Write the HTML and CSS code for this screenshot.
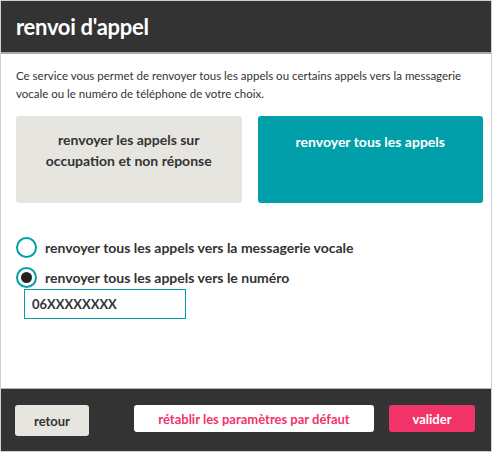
FILE: index.html
```html
<!DOCTYPE html>
<html lang="fr">
<head>
    <meta charset="UTF-8">
    <meta name="viewport" content="width=device-width, initial-scale=1.0">
    <title>renvoi d'appel</title>
    <link rel="stylesheet" href="styles.css">
</head>
<body>
    <div class="dialog">
        <header class="dialog-header">
            <h1>renvoi d'appel</h1>
        </header>

        <div class="dialog-body">
            <p class="intro">Ce service vous permet de renvoyer tous les appels ou certains appels vers la messagerie vocale ou le numéro de téléphone de votre choix.</p>

            <div class="modes">
                <button class="mode">renvoyer les appels sur occupation et non réponse</button>
                <button class="mode active">renvoyer tous les appels</button>
            </div>

            <div class="options">
                <label class="option">
                    <input type="radio" name="target">
                    <span class="radio"></span>
                    renvoyer tous les appels vers la messagerie vocale
                </label>
                <label class="option">
                    <input type="radio" name="target" checked>
                    <span class="radio"></span>
                    renvoyer tous les appels vers le numéro
                </label>
                <input class="number" type="text" value="06XXXXXXXX">
            </div>
        </div>

        <footer class="dialog-footer">
            <button class="btn btn-back">retour</button>
            <button class="btn btn-reset">rétablir les paramètres par défaut</button>
            <button class="btn btn-ok">valider</button>
        </footer>
    </div>
</body>
</html>
```

FILE: styles.css
```css
body {
    margin: 0;
    padding: 0;
    font-family: 'Lato', 'Open Sans', sans-serif;
    color: #333;
    background-color: #fff;
}
.dialog {
    width: 490px;
    height: 450px;
    border: 1px solid #d0d0d0;
    border-right-width: 2px;
    display: flex;
    flex-direction: column;
}
.dialog-header {
    background-color: #333;
    height: 51px;
    border-bottom: 2px solid #a9a9a9;
    display: flex;
    align-items: center;
    padding: 0 15px;
}
.dialog-header h1 {
    margin: 0;
    color: #fff;
    font-size: 22px;
    font-weight: bold;
    letter-spacing: -0.3px;
}
.dialog-body {
    flex: 1;
    padding: 13px 8px 0 15px;
}
.intro {
    margin: 0;
    font-size: 11.5px;
    line-height: 18px;
}
.modes {
    display: flex;
    gap: 16px;
    margin-top: 13px;
}
.mode {
    flex: 1;
    height: 87px;
    border: none;
    border-radius: 3px;
    background-color: #e6e5df;
    color: #333;
    font-family: inherit;
    font-size: 14px;
    font-weight: bold;
    line-height: 21px;
    padding: 13px 16px 0;
    align-self: flex-start;
    display: flex;
    justify-content: center;
    text-align: center;
}
.mode.active {
    background-color: #009faa;
    color: #fff;
    padding-top: 15px;
}
.options {
    margin-top: 29px;
    display: flex;
    flex-direction: column;
}
.option {
    display: flex;
    align-items: center;
    gap: 8px;
    height: 30px;
    font-size: 14px;
    font-weight: bold;
    cursor: pointer;
}
.option input {
    display: none;
}
.radio {
    width: 17px;
    height: 17px;
    border: 2px solid #009faa;
    border-radius: 50%;
    background-color: #fff;
    position: relative;
}
.option input:checked + .radio::after {
    content: "";
    position: absolute;
    top: 3px;
    left: 3px;
    width: 11px;
    height: 11px;
    border-radius: 50%;
    background-color: #222;
}
.number {
    margin: -3px 0 0 8px;
    width: 162px;
    height: 30px;
    box-sizing: border-box;
    border: 1px solid #009faa;
    padding: 0 7px;
    font-family: inherit;
    font-size: 13px;
    font-weight: bold;
    color: #333;
    outline: none;
}
.dialog-footer {
    background-color: #333;
    border-top: 1px solid #b5b5b5;
    height: 63px;
    display: flex;
    align-items: flex-start;
    padding: 16px 15px 0 14px;
    box-sizing: border-box;
}
.btn {
    border: none;
    border-radius: 3px;
    font-family: inherit;
    font-size: 13px;
    font-weight: bold;
    height: 27px;
    cursor: pointer;
}
.btn-back {
    width: 74px;
    height: 31px;
    background-color: #e6e5df;
    color: #333;
}
.btn-reset {
    width: 240px;
    margin-left: 45px;
    background-color: #fff;
    color: #f2336a;
}
.btn-ok {
    width: 86px;
    margin-left: 15px;
    background-color: #f2336a;
    color: #fff;
}
```
